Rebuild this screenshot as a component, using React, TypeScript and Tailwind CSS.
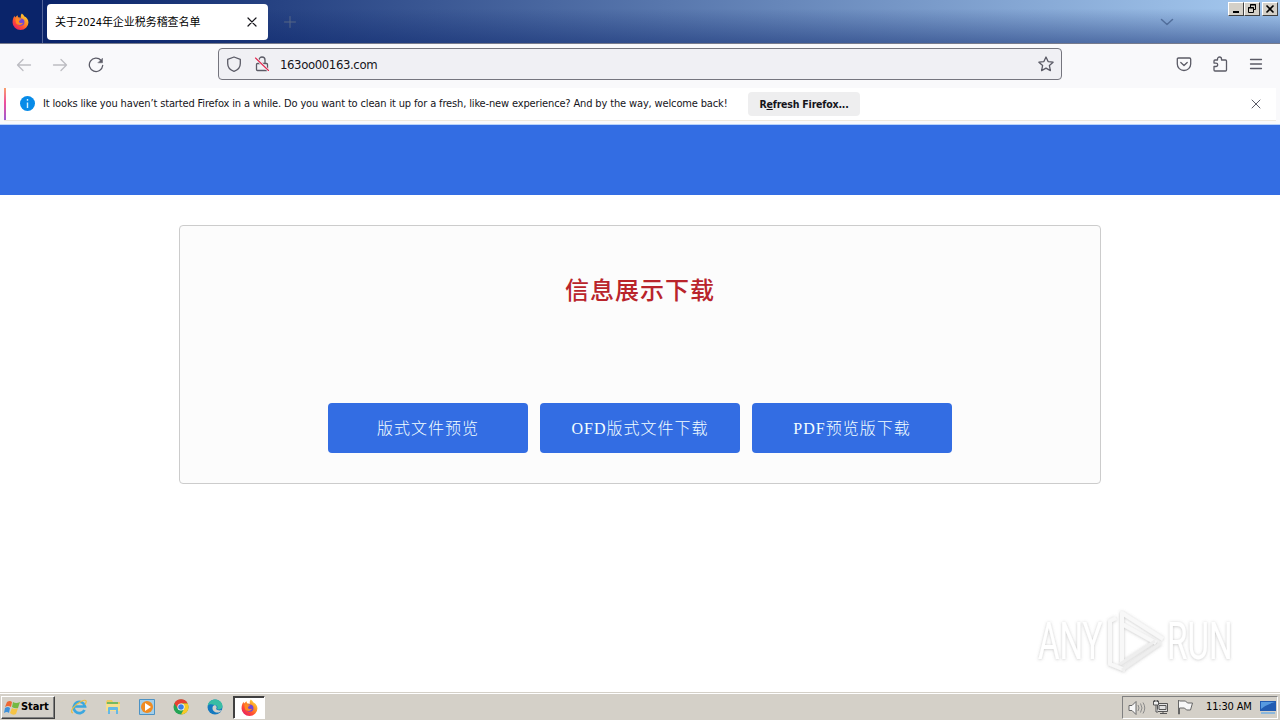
import type { ReactNode } from "react";

const Firefox = ({ id }: { id: string }) => (
  <svg width="17" height="17" viewBox="0 0 18 18">
    <defs>
      <linearGradient id={id} x1="1" y1="0" x2="0.2" y2="1">
        <stop offset="0" stopColor="#fff04a" />
        <stop offset=".4" stopColor="#ff9a22" />
        <stop offset=".7" stopColor="#ff4b35" />
        <stop offset="1" stopColor="#e31c68" />
      </linearGradient>
    </defs>
    <path d="M10.5.5c1 .8 2 2 2.400 3 2.700 1.300 4.500 3.500 4.500 6.500A8.400 8 0 0 1 .6 10C.6 7.200 1.300 5 2.700 3l.5 1.700L5.800 2.500l.6 2 3 .4C9 3 9.500 1.400 10.500.5Z" fill={`url(#${id})`} />
    <circle cx="9.300" cy="9.600" r="3.900" fill="#7047d6" />
    <path d="M3.500 6c2-1 3.500.2 4.700.5L10 7c-1 1-2.300.8-2.700 2 .5 1.800 3 2 4.600 1-1 3-5.700 3.700-7.700.5Z" fill="#ff8a22" />
  </svg>
);

const Line = ({ children, size = 16, color = "#5b5b66", width = 1.3 }: { children: ReactNode; size?: number; color?: string; width?: number }) => (
  <svg width={size} height={size} viewBox="0 0 16 16" fill="none" stroke={color} strokeWidth={width} strokeLinecap="round" strokeLinejoin="round" className="shrink-0">
    {children}
  </svg>
);

const Cross = () => <path d="M4 4l8 8M12 4l-8 8" />;

const winButton = "flex h-[14px] w-4 items-center justify-center border border-t-white border-l-white border-r-[#404040] border-b-[#404040] bg-[#d4d0c8]";

function TitleBar() {
  return (
    <header className="flex h-11 shrink-0 border-b border-[#777b8c] bg-[linear-gradient(180deg,rgba(10,36,106,0)_20%,rgba(10,36,106,.48)_100%),linear-gradient(90deg,#0a246a_0%,#0a246a_4%,#a6caf0_100%)]">
      <div className="flex w-[43px] items-center justify-center border-r border-[#53659a] pr-0.5">
        <Firefox id="fox-title" />
      </div>
      <div className="mt-1 ml-1 flex h-9 w-[221px] items-center justify-between rounded bg-white pr-2 pl-2">
        <span className="pt-0.5 whitespace-nowrap font-['DejaVu_Sans_Condensed','Noto_Sans_CJK_SC',sans-serif] text-[11px] tracking-[-0.05px] text-black">关于2024年企业税务稽查名单</span>
        <Line color="#15141a" width={1.200}><Cross /></Line>
      </div>
      <div className="mt-[14px] ml-[14px]"><Line color="#566685" width={1}><path d="M8 2.500v11M2.500 8h11" /></Line></div>
      <div className="mt-[14px] mr-[53px] ml-auto"><Line color="#526e9b" width={1.500}><path d="M2.500 5.500L8 10.500l5.500-5" /></Line></div>
      <div className="mt-0.5 mr-[2px] flex">
        <div className={winButton}><svg width="10" height="10"><path d="M2 8h6" stroke="black" strokeWidth="2" /></svg></div>
        <div className={winButton}><svg width="10" height="10" fill="none" stroke="black"><path d="M3.500 3V.5h5v5H7M3 1h6M1.500 3.500h5v5h-5zM1 4h6" /></svg></div>
        <div className={`${winButton} ml-0.5`}><svg width="10" height="10"><path d="M1.500 1.500l7 7M8.500 1.500l-7 7" stroke="black" strokeWidth="1.600" /></svg></div>
      </div>
    </header>
  );
}

function Toolbar() {
  return (
    <div className="flex h-11 shrink-0 items-start bg-[#f9f9fb] pt-1">
      <div className="flex w-[218px] gap-5 pt-[9px] pl-4">
        <Line color="#bdbdc2"><path d="M14.500 8H1.500M7 2.500L1.500 8 7 13.500" /></Line>
        <Line color="#bdbdc2"><path d="M1.500 8h13M9 2.500L14.500 8 9 13.500" /></Line>
        <Line><path d="M13 3.300A6.700 6.700 0 1 0 14.700 8.500" /><path d="M14.500 1.500v4.300h-4.300Z" fill="#5b5b66" strokeWidth=".5" /></Line>
      </div>
      <div className="flex h-8 w-[844px] items-center rounded border border-[#75757e] bg-[#f0f0f4] px-[7px]">
        <Line><path d="M8 1L14.300 3.300V7.500C14.300 11 12 14 8 15.300 4 14 1.700 11 1.700 7.500V3.300Z" /></Line>
        <span className="ml-3">
          <Line><path d="M3.500 7.500h9q1 0 1 1v5q0 1-1 1h-9q-1 0-1-1v-5q0-1 1-1ZM5 7.500V4a3 3 0 0 1 6 0v3.500" /><path d="M1.500 2l13 12.500" stroke="#f0f0f4" strokeWidth="2.500" /><path d="M1.500 2l13 12.500" stroke="#e22850" strokeWidth="1.100" /></Line>
        </span>
        <span className="ml-[10px] pt-0.5 font-['DejaVu_Sans_Condensed',sans-serif] text-[13px] tracking-[-0.38px] text-[#15141a]">163oo00163.com</span>
        <span className="ml-auto"><Line><path d="M8 1l2.100 4.600 5 .6-3.700 3.400 1 5L8 12.100l-4.400 2.500 1-5L.9 6.200l5-.6Z" /></Line></span>
      </div>
      <div className="ml-auto flex gap-5 pt-2 pr-4">
        <Line><path d="M2.500 2h11q1.200 0 1.200 1.200V8A6.700 6.500 0 0 1 1.300 8V3.200Q1.300 2 2.500 2ZM4.800 6.500L8 9.500l3.200-3" /></Line>
        <Line><path d="M5.500 4V3a2 2 0 0 1 4 0v1H13.500q1 0 1 1v9q0 1-1 1H3q-1 0-1-1v-3.500h2a1.700 1.700 0 0 0 0-3.400H2V5q0-1 1-1Z" /></Line>
        <Line><path d="M2.500 3.500h11M2.500 8h11M2.500 12.500h11" /></Line>
      </div>
    </div>
  );
}

function Notification() {
  return (
    <div className="h-[37px] shrink-0 border-b border-[#b9d3fa] bg-[#f9f9fb] pl-1">
      <div className="mr-1 flex h-[33px] items-center border-b border-[#eee8de] bg-white">
        <div className="h-full w-0.5 bg-[linear-gradient(#f9a06c,#ef4e9b_45%,#9c5ad2)]" />
        <svg width="16" height="16" viewBox="0 0 16 16" className="ml-[14px]"><circle cx="7.500" cy="7.500" r="7.500" fill="#078be8" /><path d="M7.500 6.500V12M7.500 3v1.700" stroke="#d7f2ff" strokeWidth="1.400" /></svg>
        <span className="mt-px ml-[7px] w-[705px] whitespace-nowrap font-['DejaVu_Sans_Condensed',sans-serif] text-[11px] tracking-[-0.145px] text-[#15141a]">It looks like you haven’t started Firefox in a while. Do you want to clean it up for a fresh, like-new experience? And by the way, welcome back!</span>
        <button className="h-6 w-28 rounded bg-[#eeeeef] pt-0.5 font-['DejaVu_Sans_Condensed',sans-serif] text-[10.5px] font-bold tracking-[-0.2px] whitespace-nowrap text-[#15141a]">R<u>e</u>fresh Firefox...</button>
        <span className="mr-3 ml-auto"><Line width={1}><Cross /></Line></span>
      </div>
    </div>
  );
}

function Watermark() {
  return (
    <svg width="220" height="72" viewBox="0 0 220 72" className="absolute top-[607px] left-[1032px]" fontFamily="Roboto, sans-serif" fontSize="51">
      <defs>
        <filter id="mark-shadow" x="-10%" y="-20%" width="120%" height="140%"><feDropShadow dx="0" dy="0.500" stdDeviation="1.600" floodColor="#777777" floodOpacity=".42" /></filter>
        <linearGradient id="mark-fill" gradientUnits="userSpaceOnUse" x1="0" x2="0" y1="0" y2="68"><stop offset=".5" stopColor="#ffffff" /><stop offset=".51" stopColor="#efefef" /></linearGradient>
      </defs>
      <g filter="url(#mark-shadow)" fill="url(#mark-fill)">
        <text transform="translate(6 52) scale(.65 1)" textLength="99" lengthAdjust="spacing">ANY</text>
        <text transform="translate(135 52) scale(.65 1)" textLength="101" lengthAdjust="spacing">RUN</text>
        <g fill="none" stroke="#f8f8f8" strokeWidth="4" strokeLinejoin="round">
          <path d="M84 11l-6 3v43l15 6" />
          <path d="M90 55V6l41 26" />
          <path d="M90 17l34 19" />
          <path d="M90 63l39-27M88 57l35-23" stroke="#eeeeee" strokeWidth="3" />
        </g>
      </g>
    </svg>
  );
}

function Page() {
  const button = "h-[50px] w-[200px] rounded bg-[#336de3] pt-px font-['Liberation_Serif','Noto_Sans_CJK_SC',serif] text-base font-light tracking-[1px] text-[#f4ffff]";
  return (
    <main className="min-h-0 flex-1 bg-white">
      <div className="h-[70px] bg-[#336de3]" />
      <section className="mx-auto mt-[30px] flex h-[259px] w-[922px] flex-col items-center rounded border border-[#cccccc] bg-[#fcfcfc]">
        <h1 className="mt-[45px] h-9 font-['Noto_Sans_CJK_SC',sans-serif] text-2xl leading-9 font-medium tracking-[1px] text-[#b9242b]">信息展示下载</h1>
        <div className="mt-24 flex gap-3">
          <button className={button}>版式文件预览</button>
          <button className={button}>OFD版式文件下载</button>
          <button className={button}>PDF预览版下载</button>
        </div>
      </section>
      <Watermark />
    </main>
  );
}

function Taskbar() {
  return (
    <footer className="flex h-7 shrink-0 items-center border-t border-[#d4d0c8] bg-[#d4d0c8] shadow-[inset_0_1px_white]">
      <div className="mt-0.5 ml-px flex h-[23px] w-[54px] items-center border border-t-white border-l-white border-r-[#404040] border-b-[#404040] pl-0.5 shadow-[inset_-1px_-1px_#808080]">
        <svg width="17" height="16" viewBox="0 0 17 16"><path d="M3 2q3-2 5 0L7 7Q4 5 1 7Z" fill="#ed6833" /><path d="M9 2q3 2 7 0l-2 6q-3 1-6-1Z" fill="#74b943" /><path d="M1 8q3-2 5 0l-1 5q-2-2-5 0Z" fill="#3e91da" /><path d="M8 8q3 2 6 0l-2 6q-3 2-6-1Z" fill="#f6c445" /></svg>
        <span className="font-['DejaVu_Sans_Condensed',sans-serif] text-[11px] font-bold tracking-[-0.1px] text-black">Start</span>
      </div>
      <div className="mt-px ml-4 flex items-center gap-[18px]">
        <svg width="16" height="16" viewBox="0 0 16 16" fill="none"><path d="M13.500 11A5.700 5.700 0 1 1 14 7.500H4" stroke="#3ba7df" strokeWidth="2.700" /><path d="M2 14C-2 13 3 6 10 2.500c6-3 6 0 4 3" stroke="#edbe41" strokeWidth="1.200" /></svg>
        <svg width="16" height="16" viewBox="0 0 16 16"><path d="M1 3l1-2h5l1 2h7v9H1Z" fill="#edcb64" /><path d="M2 3h11v3H2Z" fill="#77b95e" /><path d="M1 5h14v7H1Z" fill="#f6df8e" /><path d="M3 15V9q0-1 1-1h8q1 0 1 1v6h-2v-4H5v4Z" fill="#65b9e4" /></svg>
        <svg width="16" height="16" viewBox="0 0 16 16"><path d="M.5.5h15v15H.5Z" fill="#a3cee9" stroke="#4c92c4" /><circle cx="8" cy="8" r="6" fill="#f08b21" /><path d="M6 4l6 4-6 4Z" fill="white" /></svg>
        <svg width="16" height="16" viewBox="0 0 16 16"><circle cx="8" cy="8" r="7.500" fill="#23a455" /><path d="M1.300 4.500A7.500 7.500 0 0 1 14.700 4.500H8L4.500 9Z" fill="#e64132" /><path d="M14.700 4.500A7.500 7.500 0 0 1 8 15.500L11.500 9 8 4.500Z" fill="#f9c927" /><circle cx="8" cy="8" r="3.600" fill="white" /><circle cx="8" cy="8" r="2.800" fill="#387fe5" /></svg>
        <svg width="16" height="16" viewBox="0 0 16 16"><circle cx="8" cy="8" r="7.500" fill="#1479bf" /><path d="M.7 7C2-2 15-1 15.500 7c0 3-3 4-6 3 2-1 1-4-2-4C4 5 2 5 .7 7Z" fill="#39bda4" /><path d="M6 7c-2 4 2 8 7 6l2-2c-3 1-5 0-6-1 1-1 1-3-1-4Z" fill="#d4d0c8" /></svg>
      </div>
      <div className="mt-0.5 ml-[10px] flex h-[23px] w-8 items-center justify-center border border-t-[#404040] border-l-[#404040] border-r-white border-b-white bg-white shadow-[inset_1px_1px_#404040]">
        <Firefox id="fox-task" />
      </div>
      <div className="mt-0.5 mr-0.5 ml-auto flex h-[23px] w-[156px] items-center border border-t-[#808080] border-l-[#808080] border-r-white border-b-white pl-[5px]">
        <svg width="18" height="16" viewBox="0 0 18 16" fill="none" stroke="#686868"><path d="M1 5.500h3l4-4v13l-4-4H1Z" fill="#f8f8f8" /><path d="M10 5q2 3 0 6M12.500 3.500q3 4.500 0 9M15 2.500q3.500 5.500 0 11" stroke="#8a8a8a" /></svg>
        <svg width="18" height="17" viewBox="0 0 18 17" className="ml-1.5" fill="none" stroke="#555"><path d="M5.500 4.500h10v8h-10Z" fill="#e0e0e0" /><path d="M7 6.500h7v4H7ZM8 14.500h7M11 12v2" /><path d="M1.500 2v4h5V2ZM2.500 1v2M5.500 1v2M4 6v7h2" fill="#eee" /></svg>
        <svg width="17" height="17" viewBox="0 0 17 17" className="ml-1.5" fill="#f7f7f7" stroke="#666"><path d="M2.500 1v14h1v-6h5l2 2h4l2-7h-5l-2-2h-6Z" /></svg>
        <span className="ml-[13px] font-['DejaVu_Sans_Condensed',sans-serif] text-[11px] tracking-[-0.15px] whitespace-nowrap text-black">11:30 AM</span>
        <svg width="16" height="15" viewBox="0 0 16 15" className="mr-px ml-auto"><path d="M0 1h16v10H0Z" fill="#225cb2" /><path d="M1 2h14Q7 4 1 9Z" fill="#579ae0" /><path d="M1 12h14v2H1Z" fill="#8bb7dc" /></svg>
      </div>
    </footer>
  );
}

export default function App() {
  return (
    <div className="relative flex h-[720px] w-[1280px] flex-col overflow-hidden">
      <TitleBar />
      <Toolbar />
      <Notification />
      <Page />
      <Taskbar />
    </div>
  );
}
